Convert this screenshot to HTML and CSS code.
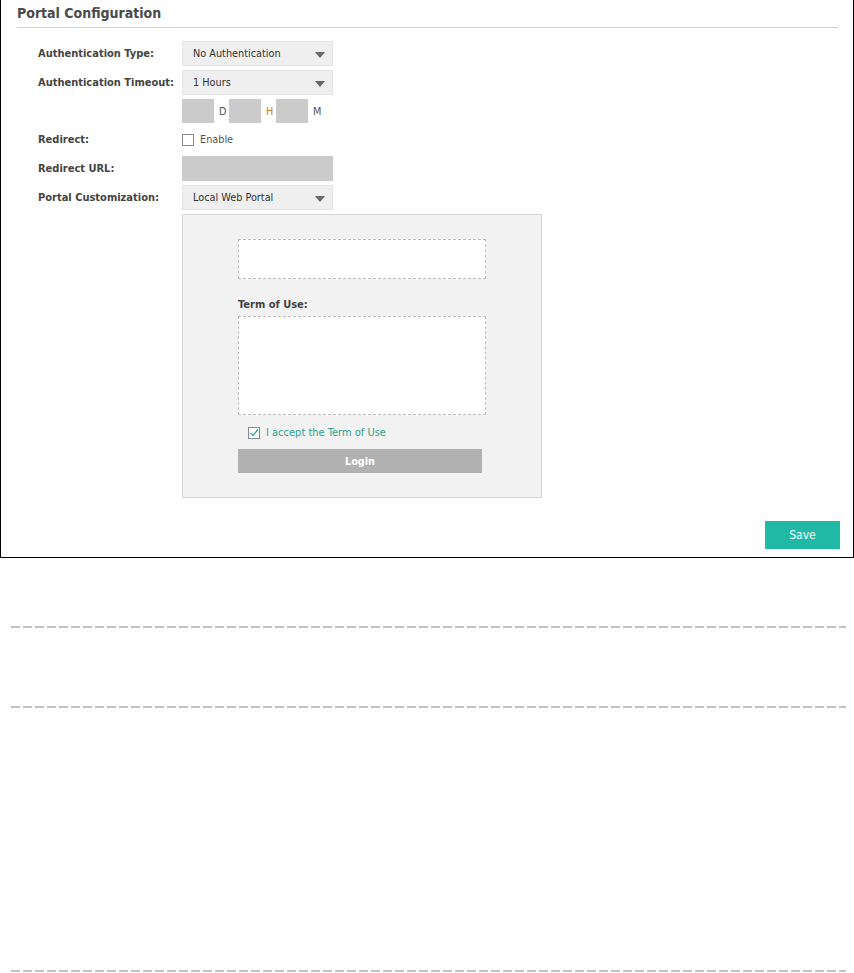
FILE: index.html
```html
<!DOCTYPE html>
<html lang="en">
<head>
  <meta charset="UTF-8">
  <title>Portal Configuration</title>
  <link rel="stylesheet" href="styles.css">
</head>
<body>
  <div class="frame">
    <div class="head">Portal Configuration</div>

    <div class="form">
      <div class="row">
        <label class="lbl">Authentication Type:</label>
        <div class="select">No Authentication<span class="arrow"></span></div>
      </div>
      <div class="row">
        <label class="lbl">Authentication Timeout:</label>
        <div class="select">1 Hours<span class="arrow"></span></div>
      </div>
      <div class="row short">
        <span class="lbl"></span>
        <div class="dhm">
          <span class="box"></span><span class="unit">D</span>
          <span class="box"></span><span class="unit h">H</span>
          <span class="box"></span><span class="unit">M</span>
        </div>
      </div>
      <div class="row">
        <label class="lbl">Redirect:</label>
        <div class="check"><span class="cb"></span>Enable</div>
      </div>
      <div class="row">
        <label class="lbl">Redirect URL:</label>
        <div class="input"></div>
      </div>
      <div class="row">
        <label class="lbl">Portal Customization:</label>
        <div class="select">Local Web Portal<span class="arrow"></span></div>
      </div>
      <div class="row top">
        <span class="lbl"></span>
        <div class="preview">
          <div class="dash logo"></div>
          <div class="terms-title">Term of Use:</div>
          <div class="dash terms"></div>
          <div class="accept">
            <span class="cb on">
              <svg width="10" height="10" viewBox="0 0 10 10"><path d="M1.5 5 L4 7.5 L9 1.5" fill="none" stroke="#2bab9b" stroke-width="1.3"/></svg>
            </span>
            I accept the Term of Use
          </div>
          <div class="login">Login</div>
        </div>
      </div>
    </div>

    <div class="actions">
      <button class="save">Save</button>
    </div>
  </div>

  <div class="sep first"></div>
  <div class="sep second"></div>
  <div class="sep third"></div>
</body>
</html>
```

FILE: styles.css
```css
* {
  box-sizing: border-box;
}

body {
  margin: 0;
  background: #fff;
  font-family: "DejaVu Sans Condensed", "DejaVu Sans", sans-serif;
  font-size: 10.8px;
  color: #333;
}

.frame {
  width: 854px;
  height: 558px;
  border: 1px solid #000;
  border-top: none;
  display: flex;
  flex-direction: column;
}

.head {
  margin: 0 15px 0 16px;
  height: 28px;
  padding-top: 5px;
  border-bottom: 1px solid #d2d2d2;
  font-size: 14px;
  font-weight: bold;
  color: #4a4a4a;
}

.form {
  margin-top: 13px;
  padding-left: 37px;
  display: flex;
  flex-direction: column;
  gap: 4px;
}

.row {
  display: flex;
  align-items: center;
  min-height: 25px;
}

.row.short {
  min-height: 24px;
}

.row.top {
  align-items: flex-start;
}

.lbl {
  width: 144px;
  flex: none;
  font-weight: bold;
  font-size: 11px;
  color: #444;
}

.select {
  width: 151px;
  height: 25px;
  background: #efefef;
  border: 1px solid #e4e4e4;
  padding-left: 10px;
  display: flex;
  align-items: center;
  position: relative;
  color: #333;
}

.arrow {
  position: absolute;
  right: 7px;
  top: 10px;
  border-left: 5px solid transparent;
  border-right: 5px solid transparent;
  border-top: 6px solid #666;
}

.dhm {
  display: flex;
  align-items: center;
  height: 24px;
}

.box {
  width: 32px;
  height: 24px;
  background: #cbcbcb;
}

.unit {
  width: 15px;
  padding-left: 5px;
  color: #555;
}

.unit.h {
  color: #c97b2f;
}

.check {
  display: flex;
  align-items: center;
  color: #555;
}

.cb {
  width: 12px;
  height: 12px;
  border: 1px solid #888;
  background: #fff;
  margin-right: 6px;
  display: flex;
  align-items: center;
  justify-content: center;
}

.input {
  width: 151px;
  height: 25px;
  background: #cbcbcb;
}

.preview {
  width: 360px;
  height: 284px;
  background: #f2f2f2;
  border: 1px solid #d6d6d6;
  padding: 24px 0 0 55px;
}

.dash {
  width: 248px;
  background: #fff;
  border: 1px dashed #bdbdbd;
}

.dash.logo {
  height: 40px;
}

.terms-title {
  margin-top: 19px;
  height: 18px;
  font-weight: bold;
  font-size: 11px;
  color: #444;
}

.dash.terms {
  height: 99px;
}

.accept {
  display: flex;
  align-items: center;
  margin: 10px 0 0 10px;
  height: 15px;
  font-size: 11px;
  color: #2fa090;
}

.accept .cb {
  width: 12px;
  height: 12px;
  border-color: #8a8a8a;
}

.login {
  margin-top: 9px;
  width: 244px;
  height: 24px;
  background: #b1b1b1;
  color: #fff;
  font-weight: bold;
  display: flex;
  align-items: center;
  justify-content: center;
}

.actions {
  margin-top: auto;
  padding: 0 13px 8px 0;
  display: flex;
  justify-content: flex-end;
}

.save {
  width: 75px;
  height: 28px;
  border: none;
  background: #20b9a5;
  color: #fff;
  font-family: inherit;
  font-size: 12px;
}

.sep {
  margin-left: 11px;
  width: 835px;
  height: 2px;
  background: repeating-linear-gradient(to right, #c2c2c2 0 9px, transparent 9px 12px);
}

.sep.first {
  margin-top: 68px;
}

.sep.second {
  margin-top: 78px;
}

.sep.third {
  margin-top: 262px;
}
```
